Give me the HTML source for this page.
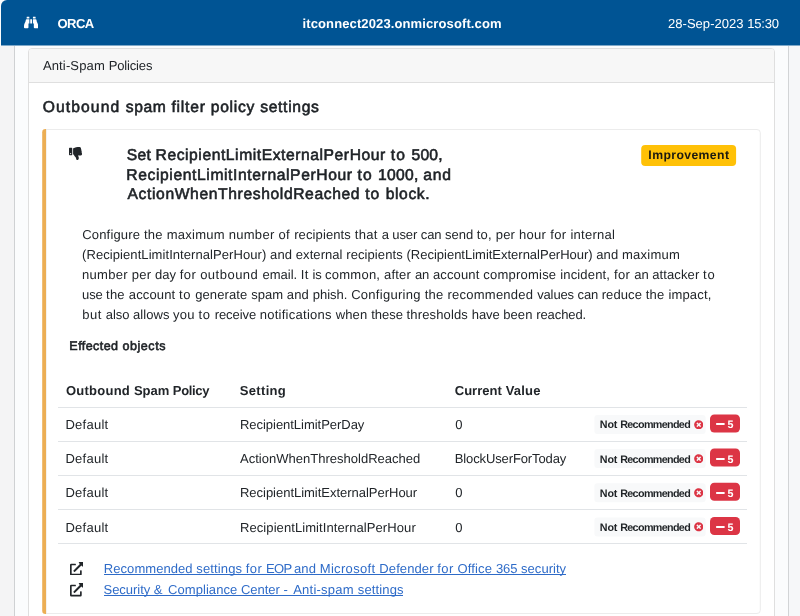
<!doctype html>
<html lang="en">
<head>
<meta charset="utf-8">
<title>ORCA Report</title>
<style>
html,body{margin:0;padding:0}
body{text-rendering:geometricPrecision;width:800px;height:616px;overflow:hidden;position:relative;background:#fbfcfd;font-family:"Liberation Sans",Arial,sans-serif;color:#212529}
.abs{position:absolute;box-sizing:border-box}
.ln{position:absolute;white-space:pre}
#txt{position:absolute;left:0;top:0;width:800px;height:616px;will-change:transform}
.t{white-space:pre}
.u{position:absolute;height:1px;display:block}
.sb{-webkit-text-stroke:0.6px currentColor}
.ul{text-decoration:underline;text-decoration-thickness:1px;text-underline-offset:1.6px}
#nav{left:1px;top:0;width:799px;height:46px;background:#005494;border-bottom:1px solid #7fa9c9;border-top-left-radius:6px}
#lline{left:0;top:46px;width:14px;height:570px;background:#f4f4f5;border-right:1px solid #cfd1d3;box-sizing:content-box}
#rline{left:788px;top:46px;width:12px;height:570px;background:#f6f7f9;border-left:1px solid #d2d4d6;box-sizing:content-box}
#card{left:28px;top:48px;width:747px;height:600px;background:#fff;border:1px solid #dfdfdf;border-radius:4px}
#chead{left:0;top:0;width:745px;height:34px;background:#f7f7f7;border-bottom:1px solid #dfdfdf;border-radius:3px 3px 0 0}
#callout{left:0;top:0}
.hr{position:absolute;left:58px;width:689px;height:1px;background:#e1e4e7}
.bw{background:#ffc107;border-radius:3.5px}
.bl{background:#f8f9fa;border-radius:3px}
.bd{background:#dc3545;border-radius:4.5px}
svg{position:absolute;display:block}
</style>
</head>
<body>
<div id="nav" class="abs"></div>
<div id="lline" class="abs"></div>
<div id="rline" class="abs"></div>
<div id="card" class="abs"><div id="chead" class="abs"></div></div>
<svg id="callout" class="abs" width="800" height="616" viewBox="0 0 800 616"><path d="M46 129.5H757a3.3 3.3 0 0 1 3.3 3.3V610.2a3.3 3.3 0 0 1 -3.3 3.3H46Z" fill="#fff" stroke="#ececec" stroke-width="1"/><path d="M46.05 129H45.5a3.3 3.3 0 0 0 -3.3 3.3V610.7a3.3 3.3 0 0 0 3.3 3.3H46.05Z" fill="#ecae54"/></svg>

<!-- binoculars -->
<svg style="left:23.8px;top:15.8px" width="14.3" height="13.2" viewBox="0 0 512 512" preserveAspectRatio="none"><path fill="#fff" d="M416 48c0-8.84-7.16-16-16-16h-64c-8.84 0-16 7.16-16 16v48h96V48zM63.91 159.99C61.4 253.84 3.46 274.22 0 404v44c0 17.67 14.33 32 32 32h96c17.67 0 32-14.33 32-32V288h32V128H95.84c-17.63 0-31.45 14.37-31.93 31.99zm384.18 0c-.48-17.62-14.3-31.99-31.93-31.99H320v160h32v160c0 17.67 14.33 32 32 32h96c17.67 0 32-14.33 32-32v-44c-3.46-129.78-61.4-150.16-63.91-244.01zM176 32h-64c-8.84 0-16 7.16-16 16v48h96V48c0-8.84-7.16-16-16-16zm48 256h64V128h-64v160z"/></svg>

<!-- thumbs down -->
<svg style="left:69.1px;top:146.9px" width="13.1" height="13.1" viewBox="0 0 512 512"><path fill="#212529" d="M0 56v240c0 13.255 10.745 24 24 24h80c13.255 0 24-10.745 24-24V56c0-13.255-10.745-24-24-24H24C10.745 32 0 42.745 0 56zm40 200c0-13.255 10.745-24 24-24s24 10.745 24 24-10.745 24-24 24-24-10.745-24-24zm272 256c-20.183 0-29.485-39.293-33.931-57.795-5.206-21.666-10.589-44.07-25.393-58.902-32.469-32.524-49.503-73.967-89.117-113.111a11.98 11.98 0 0 1-3.558-8.521V59.901c0-6.541 5.243-11.878 11.783-11.998 15.831-.29 36.694-9.079 52.651-16.178C256.189 17.598 295.709.017 343.995 0h2.844c42.777 0 93.363.413 113.774 29.737 8.392 12.057 10.446 27.034 6.148 44.632 16.312 17.053 25.063 48.863 16.382 74.757 17.544 23.432 19.143 56.132 9.308 79.469l.11.11c11.893 11.949 19.523 31.259 19.439 49.197-.156 30.352-26.157 58.098-59.553 58.098H350.723C358.03 364.34 384 388.132 384 430.548 384 504 336 512 312 512z"/></svg>

<svg style="left:0;top:0" width="800" height="200" viewBox="0 0 800 200"><rect x="641.2" y="145.1" width="94.9" height="21" rx="4" fill="#ffc107"/></svg>

<div class="hr" style="top:407px"></div>
<div class="hr" style="top:441px"></div>
<div class="hr" style="top:475px"></div>
<div class="hr" style="top:509px"></div>
<div class="hr" style="top:543px"></div>

<svg style="left:0;top:0" width="800" height="616" viewBox="0 0 800 616">
<rect x="594.4" y="414.90" width="111.2" height="19" rx="3" fill="#f8f9fa"/><rect x="710" y="414.40" width="30" height="18" rx="4.3" fill="#dc3545"/>
<rect x="594.4" y="449.10" width="111.2" height="19" rx="3" fill="#f8f9fa"/><rect x="710" y="448.60" width="30" height="18" rx="4.3" fill="#dc3545"/>
<rect x="594.4" y="483.30" width="111.2" height="19" rx="3" fill="#f8f9fa"/><rect x="710" y="482.80" width="30" height="18" rx="4.3" fill="#dc3545"/>
<rect x="594.4" y="517.50" width="111.2" height="19" rx="3" fill="#f8f9fa"/><rect x="710" y="517.00" width="30" height="18" rx="4.3" fill="#dc3545"/>
</svg>
<svg style="left:693.8px;top:419.60px" width="9.5" height="9.5" viewBox="0 0 512 512"><path fill="#dc3545" d="M256 8C119 8 8 119 8 256s111 248 248 248 248-111 248-248S393 8 256 8zm121.6 313.1c4.7 4.7 4.7 12.3 0 17L338 377.6c-4.7 4.7-12.3 4.7-17 0L256 312l-65.1 65.6c-4.7 4.7-12.3 4.7-17 0L134.4 338c-4.7-4.7-4.7-12.3 0-17l65.6-65-65.6-65.1c-4.7-4.7-4.7-12.3 0-17l39.6-39.6c4.7-4.7 12.3-4.7 17 0l65 65.7 65.1-65.6c4.7-4.7 12.3-4.7 17 0l39.6 39.6c4.7 4.7 4.7 12.3 0 17L312 256l65.6 65.1z"/></svg>
<svg style="left:716px;top:419.40px" width="8.75" height="10" viewBox="0 0 448 512"><path fill="#fff" d="M416 208H32c-17.67 0-32 14.33-32 32v32c0 17.67 14.33 32 32 32h384c17.67 0 32-14.33 32-32v-32c0-17.67-14.33-32-32-32z"/></svg>
<svg style="left:693.8px;top:453.80px" width="9.5" height="9.5" viewBox="0 0 512 512"><path fill="#dc3545" d="M256 8C119 8 8 119 8 256s111 248 248 248 248-111 248-248S393 8 256 8zm121.6 313.1c4.7 4.7 4.7 12.3 0 17L338 377.6c-4.7 4.7-12.3 4.7-17 0L256 312l-65.1 65.6c-4.7 4.7-12.3 4.7-17 0L134.4 338c-4.7-4.7-4.7-12.3 0-17l65.6-65-65.6-65.1c-4.7-4.7-4.7-12.3 0-17l39.6-39.6c4.7-4.7 12.3-4.7 17 0l65 65.7 65.1-65.6c4.7-4.7 12.3-4.7 17 0l39.6 39.6c4.7 4.7 4.7 12.3 0 17L312 256l65.6 65.1z"/></svg>
<svg style="left:716px;top:453.60px" width="8.75" height="10" viewBox="0 0 448 512"><path fill="#fff" d="M416 208H32c-17.67 0-32 14.33-32 32v32c0 17.67 14.33 32 32 32h384c17.67 0 32-14.33 32-32v-32c0-17.67-14.33-32-32-32z"/></svg>
<svg style="left:693.8px;top:488.00px" width="9.5" height="9.5" viewBox="0 0 512 512"><path fill="#dc3545" d="M256 8C119 8 8 119 8 256s111 248 248 248 248-111 248-248S393 8 256 8zm121.6 313.1c4.7 4.7 4.7 12.3 0 17L338 377.6c-4.7 4.7-12.3 4.7-17 0L256 312l-65.1 65.6c-4.7 4.7-12.3 4.7-17 0L134.4 338c-4.7-4.7-4.7-12.3 0-17l65.6-65-65.6-65.1c-4.7-4.7-4.7-12.3 0-17l39.6-39.6c4.7-4.7 12.3-4.7 17 0l65 65.7 65.1-65.6c4.7-4.7 12.3-4.7 17 0l39.6 39.6c4.7 4.7 4.7 12.3 0 17L312 256l65.6 65.1z"/></svg>
<svg style="left:716px;top:487.80px" width="8.75" height="10" viewBox="0 0 448 512"><path fill="#fff" d="M416 208H32c-17.67 0-32 14.33-32 32v32c0 17.67 14.33 32 32 32h384c17.67 0 32-14.33 32-32v-32c0-17.67-14.33-32-32-32z"/></svg>
<svg style="left:693.8px;top:522.20px" width="9.5" height="9.5" viewBox="0 0 512 512"><path fill="#dc3545" d="M256 8C119 8 8 119 8 256s111 248 248 248 248-111 248-248S393 8 256 8zm121.6 313.1c4.7 4.7 4.7 12.3 0 17L338 377.6c-4.7 4.7-12.3 4.7-17 0L256 312l-65.1 65.6c-4.7 4.7-12.3 4.7-17 0L134.4 338c-4.7-4.7-4.7-12.3 0-17l65.6-65-65.6-65.1c-4.7-4.7-4.7-12.3 0-17l39.6-39.6c4.7-4.7 12.3-4.7 17 0l65 65.7 65.1-65.6c4.7-4.7 12.3-4.7 17 0l39.6 39.6c4.7 4.7 4.7 12.3 0 17L312 256l65.6 65.1z"/></svg>
<svg style="left:716px;top:522.00px" width="8.75" height="10" viewBox="0 0 448 512"><path fill="#fff" d="M416 208H32c-17.67 0-32 14.33-32 32v32c0 17.67 14.33 32 32 32h384c17.67 0 32-14.33 32-32v-32c0-17.67-14.33-32-32-32z"/></svg>


<!-- external links -->
<svg style="left:70px;top:561.8px" width="13.4" height="13.4" viewBox="0 0 512 512"><path fill="#212529" d="M432,320H400a16,16,0,0,0-16,16V448H64V128H208a16,16,0,0,0,16-16V80a16,16,0,0,0-16-16H48A48,48,0,0,0,0,112V464a48,48,0,0,0,48,48H400a48,48,0,0,0,48-48V336A16,16,0,0,0,432,320ZM488,0h-128c-21.37,0-32.05,25.91-17,41l35.73,35.73L135,320.37a24,24,0,0,0,0,34L157.67,377a24,24,0,0,0,34,0L435.28,133.32,471,169c15,15,41,4.5,41-17V24A24,24,0,0,0,488,0Z"/></svg>
<svg style="left:70px;top:583.2px" width="13.4" height="13.4" viewBox="0 0 512 512"><path fill="#212529" d="M432,320H400a16,16,0,0,0-16,16V448H64V128H208a16,16,0,0,0,16-16V80a16,16,0,0,0-16-16H48A48,48,0,0,0,0,112V464a48,48,0,0,0,48,48H400a48,48,0,0,0,48-48V336A16,16,0,0,0,432,320ZM488,0h-128c-21.37,0-32.05,25.91-17,41l35.73,35.73L135,320.37a24,24,0,0,0,0,34L157.67,377a24,24,0,0,0,34,0L435.28,133.32,471,169c15,15,41,4.5,41-17V24A24,24,0,0,0,488,0Z"/></svg>

<div id="txt">
<div id="orca" class="ln" style="left:57.54px;top:16.02px;font-size:13.023px;line-height:15.63px;font-weight:700;color:#fff"><span id="orca_0" class="t" style="letter-spacing:-0.534px">ORCA</span></div>
<div id="dom" class="ln" style="left:302.54px;top:16.01px;font-size:13.023px;line-height:15.63px;font-weight:700;color:#fff"><span id="dom_0" class="t" style="letter-spacing:0.107px">itconnect2023.onmicrosoft.com</span></div>
<div id="date" class="ln" style="left:668.01px;top:16.01px;font-size:13.023px;line-height:15.63px;font-weight:400;color:#fff"><span id="date_0" class="t" style="letter-spacing:0.028px">28-Sep-2023 </span><span id="date_1" class="t" style="letter-spacing:-0.196px">15:30</span></div>
<div id="asp" class="ln" style="left:42.91px;top:58.00px;font-size:13.023px;line-height:15.63px;font-weight:400;color:#212529"><span id="asp_0" class="t" style="letter-spacing:0.140px">Anti-Spam </span><span id="asp_1" class="t" style="letter-spacing:-0.159px">Policies</span></div>
<div id="h5a" class="ln sb" style="left:42.69px;top:99.01px;font-size:15.67px;line-height:18.8px;font-weight:400;color:#1e2226"><span id="h5a_0" class="t" style="letter-spacing:1.103px">Outbound </span><span id="h5a_1" class="t" style="letter-spacing:0.614px">spam </span><span id="h5a_2" class="t" style="letter-spacing:0.759px">filter </span><span id="h5a_3" class="t" style="letter-spacing:0.731px">policy </span><span id="h5a_4" class="t" style="letter-spacing:0.668px">settings</span></div>
<div id="h1" class="ln sb" style="left:126.80px;top:147.01px;font-size:15.67px;line-height:18.8px;font-weight:400;color:#1e2226"><span id="h1_0" class="t" style="letter-spacing:0.217px">Set </span><span id="h1_1" class="t" style="letter-spacing:0.560px">RecipientLimitExternalPerHour </span><span id="h1_2" class="t" style="letter-spacing:1.081px">to </span><span id="h1_3" class="t" style="letter-spacing:0.283px">500,</span></div>
<div id="h2" class="ln sb" style="left:126.34px;top:167.01px;font-size:15.67px;line-height:18.8px;font-weight:400;color:#1e2226"><span id="h2_0" class="t" style="letter-spacing:0.601px">RecipientLimitInternalPerHour </span><span id="h2_1" class="t" style="letter-spacing:1.031px">to </span><span id="h2_2" class="t" style="letter-spacing:0.294px">1000, </span><span id="h2_3" class="t" style="letter-spacing:0.781px">and</span></div>
<div id="h3" class="ln sb" style="left:127.50px;top:186.01px;font-size:15.67px;line-height:18.8px;font-weight:400;color:#1e2226"><span id="h3_0" class="t" style="letter-spacing:0.614px">ActionWhenThresholdReached </span><span id="h3_1" class="t" style="letter-spacing:1.054px">to </span><span id="h3_2" class="t" style="letter-spacing:0.599px">block.</span></div>
<div id="impr" class="ln" style="left:648.37px;top:148.00px;font-size:12.213px;line-height:14.66px;font-weight:700;color:#1c1a10"><span id="impr_0" class="t" style="letter-spacing:0.397px">Improvement</span></div>
<div id="p1" class="ln" style="left:82.20px;top:227.01px;font-size:13.023px;line-height:15.63px;font-weight:400;color:#212529"><span id="p1_0" class="t" style="letter-spacing:0.176px">Configure </span><span id="p1_1" class="t" style="letter-spacing:0.256px">the </span><span id="p1_2" class="t" style="letter-spacing:0.237px">maximum </span><span id="p1_3" class="t" style="letter-spacing:0.293px">number </span><span id="p1_4" class="t" style="letter-spacing:0.397px">of </span><span id="p1_5" class="t" style="letter-spacing:0.113px">recipients </span><span id="p1_6" class="t" style="letter-spacing:0.351px">that </span><span id="p1_7" class="t" style="letter-spacing:-0.199px">a </span><span id="p1_8" class="t" style="letter-spacing:-0.079px">user </span><span id="p1_9" class="t" style="letter-spacing:-0.103px">can </span><span id="p1_10" class="t" style="letter-spacing:-0.016px">send </span><span id="p1_11" class="t" style="letter-spacing:0.206px">to, </span><span id="p1_12" class="t" style="letter-spacing:0.181px">per </span><span id="p1_13" class="t" style="letter-spacing:0.320px">hour </span><span id="p1_14" class="t" style="letter-spacing:0.379px">for </span><span id="p1_15" class="t" style="letter-spacing:0.234px">internal</span></div>
<div id="p2" class="ln" style="left:82.11px;top:247.01px;font-size:13.023px;line-height:15.63px;font-weight:400;color:#212529"><span id="p2_0" class="t" style="letter-spacing:0.063px">(RecipientLimitInternalPerHour) </span><span id="p2_1" class="t" style="letter-spacing:0.113px">and </span><span id="p2_2" class="t" style="letter-spacing:0.049px">external </span><span id="p2_3" class="t" style="letter-spacing:0.091px">recipients </span><span id="p2_4" class="t" style="letter-spacing:-0.017px">(RecipientLimitExternalPerHour) </span><span id="p2_5" class="t" style="letter-spacing:0.113px">and </span><span id="p2_6" class="t" style="letter-spacing:0.234px">maximum</span></div>
<div id="p3" class="ln" style="left:82.05px;top:267.01px;font-size:13.023px;line-height:15.63px;font-weight:400;color:#212529"><span id="p3_0" class="t" style="letter-spacing:0.293px">number </span><span id="p3_1" class="t" style="letter-spacing:0.181px">per </span><span id="p3_2" class="t" style="letter-spacing:0.046px">day </span><span id="p3_3" class="t" style="letter-spacing:0.379px">for </span><span id="p3_4" class="t" style="letter-spacing:0.485px">outbound </span><span id="p3_5" class="t" style="letter-spacing:-0.001px">email. </span><span id="p3_6" class="t" style="letter-spacing:0.296px">It </span><span id="p3_7" class="t" style="letter-spacing:-0.152px">is </span><span id="p3_8" class="t" style="letter-spacing:0.231px">common, </span><span id="p3_9" class="t" style="letter-spacing:0.191px">after </span><span id="p3_10" class="t" style="letter-spacing:-0.023px">an </span><span id="p3_11" class="t" style="letter-spacing:0.137px">account </span><span id="p3_12" class="t" style="letter-spacing:0.222px">compromise </span><span id="p3_13" class="t" style="letter-spacing:0.162px">incident, </span><span id="p3_14" class="t" style="letter-spacing:0.379px">for </span><span id="p3_15" class="t" style="letter-spacing:-0.023px">an </span><span id="p3_16" class="t" style="letter-spacing:0.096px">attacker </span><span id="p3_17" class="t" style="letter-spacing:0.751px">to</span></div>
<div id="p4" class="ln" style="left:82.10px;top:287.01px;font-size:13.023px;line-height:15.63px;font-weight:400;color:#212529"><span id="p4_0" class="t" style="letter-spacing:-0.175px">use </span><span id="p4_1" class="t" style="letter-spacing:0.260px">the </span><span id="p4_2" class="t" style="letter-spacing:0.141px">account </span><span id="p4_3" class="t" style="letter-spacing:0.516px">to </span><span id="p4_4" class="t" style="letter-spacing:0.120px">generate </span><span id="p4_5" class="t" style="letter-spacing:0.016px">spam </span><span id="p4_6" class="t" style="letter-spacing:0.142px">and </span><span id="p4_7" class="t" style="letter-spacing:0.018px">phish. </span><span id="p4_8" class="t" style="letter-spacing:0.281px">Configuring </span><span id="p4_9" class="t" style="letter-spacing:0.260px">the </span><span id="p4_10" class="t" style="letter-spacing:0.237px">recommended </span><span id="p4_11" class="t" style="letter-spacing:-0.127px">values </span><span id="p4_12" class="t" style="letter-spacing:-0.099px">can </span><span id="p4_13" class="t" style="letter-spacing:0.073px">reduce </span><span id="p4_14" class="t" style="letter-spacing:0.260px">the </span><span id="p4_15" class="t" style="letter-spacing:0.155px">impact,</span></div>
<div id="p5" class="ln" style="left:82.26px;top:307.01px;font-size:13.023px;line-height:15.63px;font-weight:400;color:#212529"><span id="p5_0" class="t" style="letter-spacing:0.470px">but </span><span id="p5_1" class="t" style="letter-spacing:-0.061px">also </span><span id="p5_2" class="t" style="letter-spacing:0.039px">allows </span><span id="p5_3" class="t" style="letter-spacing:0.224px">you </span><span id="p5_4" class="t" style="letter-spacing:0.510px">to </span><span id="p5_5" class="t" style="letter-spacing:-0.063px">receive </span><span id="p5_6" class="t" style="letter-spacing:0.261px">notifications </span><span id="p5_7" class="t" style="letter-spacing:0.134px">when </span><span id="p5_8" class="t" style="letter-spacing:-0.013px">these </span><span id="p5_9" class="t" style="letter-spacing:0.141px">thresholds </span><span id="p5_10" class="t" style="letter-spacing:-0.089px">have </span><span id="p5_11" class="t" style="letter-spacing:0.093px">been </span><span id="p5_12" class="t" style="letter-spacing:-0.093px">reached.</span></div>
<div id="eff" class="ln sb" style="left:69.37px;top:339.01px;font-size:12.53px;line-height:15.04px;font-weight:400;color:#1e2226"><span id="eff_0" class="t" style="letter-spacing:0.427px">Effected </span><span id="eff_1" class="t" style="letter-spacing:0.574px">objects</span></div>
<div id="th1" class="ln" style="left:65.92px;top:383.01px;font-size:13.023px;line-height:15.63px;font-weight:700;color:#212529"><span id="th1_0" class="t" style="letter-spacing:0.248px">Outbound </span><span id="th1_1" class="t" style="letter-spacing:-0.027px">Spam </span><span id="th1_2" class="t" style="letter-spacing:-0.342px">Policy</span></div>
<div id="th2" class="ln" style="left:239.80px;top:383.01px;font-size:13.023px;line-height:15.63px;font-weight:700;color:#212529"><span id="th2_0" class="t" style="letter-spacing:0.313px">Setting</span></div>
<div id="th3" class="ln" style="left:454.69px;top:383.01px;font-size:13.023px;line-height:15.63px;font-weight:700;color:#212529"><span id="th3_0" class="t" style="letter-spacing:0.039px">Current </span><span id="th3_1" class="t" style="letter-spacing:0.191px">Value</span></div>
<div id="r0a" class="ln" style="left:65.48px;top:417.01px;font-size:13.023px;line-height:15.63px;font-weight:400;color:#212529"><span id="r0a_0" class="t" style="letter-spacing:0.244px">Default</span></div>
<div id="r0b" class="ln" style="left:239.97px;top:417.01px;font-size:13.023px;line-height:15.63px;font-weight:400;color:#212529"><span id="r0b_0" class="t" style="letter-spacing:-0.041px">RecipientLimitPerDay</span></div>
<div id="r0c" class="ln" style="left:455.33px;top:417.01px;font-size:13.023px;line-height:15.63px;font-weight:400;color:#212529"><span id="r0c_0" class="t" style="letter-spacing:-0.064px">0</span></div>
<div id="r0d" class="ln" style="left:599.81px;top:419.00px;font-size:10.747px;line-height:12.9px;font-weight:700;color:#1f2326"><span id="r0d_0" class="t" style="letter-spacing:-0.123px">Not </span><span id="r0d_1" class="t" style="letter-spacing:-0.636px">Recommended</span></div>
<div id="r0e" class="ln" style="left:727.57px;top:419.01px;font-size:10.747px;line-height:12.9px;font-weight:700;color:#fff"><span id="r0e_0" class="t" style="letter-spacing:-0.055px">5</span></div>
<div id="r1a" class="ln" style="left:65.48px;top:451.01px;font-size:13.023px;line-height:15.63px;font-weight:400;color:#212529"><span id="r1a_0" class="t" style="letter-spacing:0.244px">Default</span></div>
<div id="r1b" class="ln" style="left:240.02px;top:451.01px;font-size:13.023px;line-height:15.63px;font-weight:400;color:#212529"><span id="r1b_0" class="t" style="letter-spacing:0.007px">ActionWhenThresholdReached</span></div>
<div id="r1c" class="ln" style="left:454.72px;top:451.01px;font-size:13.023px;line-height:15.63px;font-weight:400;color:#212529"><span id="r1c_0" class="t" style="letter-spacing:-0.124px">BlockUserForToday</span></div>
<div id="r1d" class="ln" style="left:599.81px;top:454.01px;font-size:10.747px;line-height:12.9px;font-weight:700;color:#1f2326"><span id="r1d_0" class="t" style="letter-spacing:-0.123px">Not </span><span id="r1d_1" class="t" style="letter-spacing:-0.636px">Recommended</span></div>
<div id="r1e" class="ln" style="left:727.57px;top:454.00px;font-size:10.747px;line-height:12.9px;font-weight:700;color:#fff"><span id="r1e_0" class="t" style="letter-spacing:-0.055px">5</span></div>
<div id="r2a" class="ln" style="left:65.48px;top:485.00px;font-size:13.023px;line-height:15.63px;font-weight:400;color:#212529"><span id="r2a_0" class="t" style="letter-spacing:0.244px">Default</span></div>
<div id="r2b" class="ln" style="left:239.97px;top:485.00px;font-size:13.023px;line-height:15.63px;font-weight:400;color:#212529"><span id="r2b_0" class="t" style="letter-spacing:-0.028px">RecipientLimitExternalPerHour</span></div>
<div id="r2c" class="ln" style="left:455.33px;top:485.00px;font-size:13.023px;line-height:15.63px;font-weight:400;color:#212529"><span id="r2c_0" class="t" style="letter-spacing:-0.064px">0</span></div>
<div id="r2d" class="ln" style="left:599.81px;top:488.01px;font-size:10.747px;line-height:12.9px;font-weight:700;color:#1f2326"><span id="r2d_0" class="t" style="letter-spacing:-0.123px">Not </span><span id="r2d_1" class="t" style="letter-spacing:-0.636px">Recommended</span></div>
<div id="r2e" class="ln" style="left:727.57px;top:488.00px;font-size:10.747px;line-height:12.9px;font-weight:700;color:#fff"><span id="r2e_0" class="t" style="letter-spacing:-0.055px">5</span></div>
<div id="r3a" class="ln" style="left:65.48px;top:520.02px;font-size:13.023px;line-height:15.63px;font-weight:400;color:#212529"><span id="r3a_0" class="t" style="letter-spacing:0.244px">Default</span></div>
<div id="r3b" class="ln" style="left:239.97px;top:520.02px;font-size:13.023px;line-height:15.63px;font-weight:400;color:#212529"><span id="r3b_0" class="t" style="letter-spacing:0.076px">RecipientLimitInternalPerHour</span></div>
<div id="r3c" class="ln" style="left:455.33px;top:520.02px;font-size:13.023px;line-height:15.63px;font-weight:400;color:#212529"><span id="r3c_0" class="t" style="letter-spacing:-0.064px">0</span></div>
<div id="r3d" class="ln" style="left:599.81px;top:522.00px;font-size:10.747px;line-height:12.9px;font-weight:700;color:#1f2326"><span id="r3d_0" class="t" style="letter-spacing:-0.123px">Not </span><span id="r3d_1" class="t" style="letter-spacing:-0.636px">Recommended</span></div>
<div id="r3e" class="ln" style="left:727.57px;top:522.00px;font-size:10.747px;line-height:12.9px;font-weight:700;color:#fff"><span id="r3e_0" class="t" style="letter-spacing:-0.055px">5</span></div>
<div id="l1" class="ln" style="left:103.77px;top:561.02px;font-size:13.023px;line-height:15.63px;font-weight:400;color:#2e6bc8"><span id="l1_0" class="t" style="letter-spacing:0.057px">Recommended </span><span id="l1_1" class="t" style="letter-spacing:0.116px">settings </span><span id="l1_2" class="t" style="letter-spacing:0.358px">for </span><span id="l1_3" class="t" style="letter-spacing:-0.752px">EOP </span><span id="l1_4" class="t" style="letter-spacing:0.111px">and </span><span id="l1_5" class="t" style="letter-spacing:0.311px">Microsoft </span><span id="l1_6" class="t" style="letter-spacing:0.095px">Defender </span><span id="l1_7" class="t" style="letter-spacing:0.358px">for </span><span id="l1_8" class="t" style="letter-spacing:0.136px">Office </span><span id="l1_9" class="t" style="letter-spacing:-0.043px">365 </span><span id="l1_10" class="t" style="letter-spacing:0.032px">security</span><i class="u" style="left:0.03px;top:12.98px;width:462.40px;background:#2e6bc8"></i></div>
<div id="l2" class="ln" style="left:103.56px;top:582.02px;font-size:13.023px;line-height:15.63px;font-weight:400;color:#2e6bc8"><span id="l2_0" class="t" style="letter-spacing:-0.050px">Security </span><span id="l2_1" class="t" style="letter-spacing:1.001px">&amp; </span><span id="l2_2" class="t" style="letter-spacing:0.050px">Compliance </span><span id="l2_3" class="t" style="letter-spacing:-0.024px">Center </span><span id="l2_4" class="t" style="letter-spacing:0.871px">- </span><span id="l2_5" class="t" style="letter-spacing:0.237px">Anti-spam </span><span id="l2_6" class="t" style="letter-spacing:0.132px">settings</span><i class="u" style="left:0.24px;top:12.98px;width:299.60px;background:#2e6bc8"></i></div>
</div>
</body>
</html>
